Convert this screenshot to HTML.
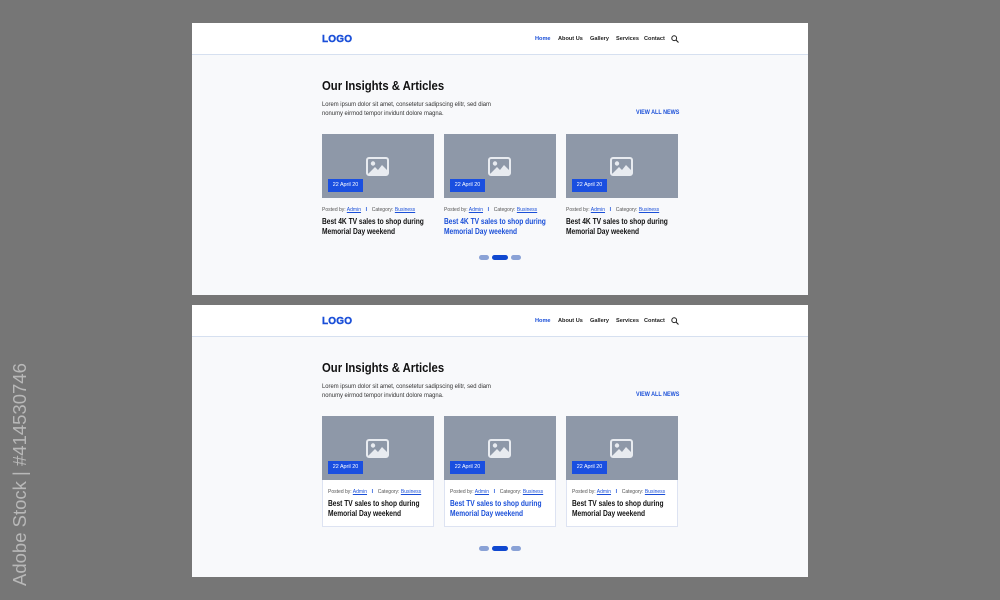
<!DOCTYPE html>
<html><head><meta charset="utf-8"><style>
*{margin:0;padding:0;box-sizing:border-box}
body{width:1000px;height:600px;background:#767676;position:relative;overflow:hidden;font-family:"Liberation Sans",Arial,sans-serif}
.p{position:absolute;left:192px;width:616px;height:272px;background:#f8f9fb}
.hd{position:absolute;left:0;top:0;width:616px;height:32px;background:#fff;border-bottom:1px solid #d6e0f0}
.a{position:absolute;white-space:nowrap;transform-origin:0 0}
.logo{left:130px;top:11px;font-size:10px;font-weight:bold;color:#1a4fd8;letter-spacing:0.2px;-webkit-text-stroke:0.4px #1a4fd8}
.nav{top:13px;font-size:5.6px;color:#222;font-weight:bold}
.h1{left:130px;top:55px;font-size:13px;font-weight:bold;color:#111;transform:scaleX(0.87)}
.para{left:130px;top:77px;font-size:6.4px;line-height:9px;color:#333;transform:scaleX(0.92)}
.van{left:444px;top:86px;font-size:6.3px;font-weight:bold;color:#1a4fd8;transform:scaleX(0.86)}
.card{position:absolute;top:111px;width:112px}
.img{position:absolute;left:0;top:0;width:112px;height:64px;background:#8e98a8}
.ic{position:absolute;left:44px;top:23px}
.bd{position:absolute;left:6px;top:45px;width:35px;height:13px;background:#1a4fe0;color:#fff;font-size:5.4px;text-align:center;line-height:13px}
.meta{position:absolute;font-size:5.4px;color:#555;white-space:nowrap;transform-origin:0 0;transform:scaleX(0.93)}
.meta u{color:#1a4fd8}
.meta b{color:#1a4fd8;margin:0 5px;font-weight:bold}
.tt{position:absolute;font-size:8px;font-weight:bold;line-height:10px;color:#111;white-space:nowrap;transform-origin:0 0;transform:scaleX(0.83)}
.blue{color:#1a4fd8}
.dot{position:absolute;top:232px;height:5px;border-radius:3px;background:#8aa2d6}
.box{position:absolute;left:0;top:0;width:112px;height:111px;background:#fff;border:1px solid #dde3f2}
</style></head><body>
<div class="a" style="left:9px;top:586px;transform:rotate(-90deg);font-size:18.5px;color:#b8b8b8;">Adobe Stock | #414530746</div>

<div class="p" style="top:23px">
<div class="hd"></div>
<div class="a logo">LOGO</div>
<div class="a nav" style="left:343px;color:#1a4fd8">Home</div>
<div class="a nav" style="left:366px">About Us</div>
<div class="a nav" style="left:398px">Gallery</div>
<div class="a nav" style="left:424px">Services</div>
<div class="a nav" style="left:452px">Contact</div>
<svg class="a" style="left:479px;top:12px" width="8" height="8" viewBox="0 0 8 8"><circle cx="3.2" cy="3.2" r="2.4" fill="none" stroke="#222" stroke-width="1"/><path d="M5 5L7.5 7.5" stroke="#222" stroke-width="1.1"/></svg>
<div class="a h1">Our Insights &amp; Articles</div>
<div class="a para">Lorem ipsum dolor sit amet, consetetur sadipscing elitr, sed diam<br>nonumy eirmod tempor invidunt dolore magna.</div>
<div class="a van">VIEW ALL NEWS</div>

<div class="card" style="left:130px"><div class="img"><svg class="ic" width="23" height="19" viewBox="0 0 23 19"><rect x="1" y="1" width="21" height="17" rx="2" fill="none" stroke="#e8ebf0" stroke-width="2"/><circle cx="7" cy="6.5" r="2.2" fill="#e8ebf0"/><path d="M2 17L9 10L12 13L16 8L21 13V17Z" fill="#e8ebf0"/></svg><div class="bd">22 April 20</div></div>
<div class="meta" style="left:0;top:73px">Posted by: <u>Admin</u><b>I</b>Category: <u>Business</u></div>
<div class="tt" style="left:0;top:83px">Best 4K TV sales to shop during<br>Memorial Day weekend</div></div>

<div class="card" style="left:252px"><div class="img"><svg class="ic" width="23" height="19" viewBox="0 0 23 19"><rect x="1" y="1" width="21" height="17" rx="2" fill="none" stroke="#e8ebf0" stroke-width="2"/><circle cx="7" cy="6.5" r="2.2" fill="#e8ebf0"/><path d="M2 17L9 10L12 13L16 8L21 13V17Z" fill="#e8ebf0"/></svg><div class="bd">22 April 20</div></div>
<div class="meta" style="left:0;top:73px">Posted by: <u>Admin</u><b>I</b>Category: <u>Business</u></div>
<div class="tt blue" style="left:0;top:83px">Best 4K TV sales to shop during<br>Memorial Day weekend</div></div>

<div class="card" style="left:374px"><div class="img"><svg class="ic" width="23" height="19" viewBox="0 0 23 19"><rect x="1" y="1" width="21" height="17" rx="2" fill="none" stroke="#e8ebf0" stroke-width="2"/><circle cx="7" cy="6.5" r="2.2" fill="#e8ebf0"/><path d="M2 17L9 10L12 13L16 8L21 13V17Z" fill="#e8ebf0"/></svg><div class="bd">22 April 20</div></div>
<div class="meta" style="left:0;top:73px">Posted by: <u>Admin</u><b>I</b>Category: <u>Business</u></div>
<div class="tt" style="left:0;top:83px">Best 4K TV sales to shop during<br>Memorial Day weekend</div></div>

<div class="dot" style="left:287px;width:10px"></div>
<div class="dot" style="left:300px;width:16px;background:#1048d0"></div>
<div class="dot" style="left:319px;width:10px"></div>
</div>

<div class="p" style="top:305px">
<div class="hd"></div>
<div class="a logo">LOGO</div>
<div class="a nav" style="left:343px;color:#1a4fd8">Home</div>
<div class="a nav" style="left:366px">About Us</div>
<div class="a nav" style="left:398px">Gallery</div>
<div class="a nav" style="left:424px">Services</div>
<div class="a nav" style="left:452px">Contact</div>
<svg class="a" style="left:479px;top:12px" width="8" height="8" viewBox="0 0 8 8"><circle cx="3.2" cy="3.2" r="2.4" fill="none" stroke="#222" stroke-width="1"/><path d="M5 5L7.5 7.5" stroke="#222" stroke-width="1.1"/></svg>
<div class="a h1">Our Insights &amp; Articles</div>
<div class="a para">Lorem ipsum dolor sit amet, consetetur sadipscing elitr, sed diam<br>nonumy eirmod tempor invidunt dolore magna.</div>
<div class="a van">VIEW ALL NEWS</div>

<div class="card" style="left:130px"><div class="box"></div><div class="img"><svg class="ic" width="23" height="19" viewBox="0 0 23 19"><rect x="1" y="1" width="21" height="17" rx="2" fill="none" stroke="#e8ebf0" stroke-width="2"/><circle cx="7" cy="6.5" r="2.2" fill="#e8ebf0"/><path d="M2 17L9 10L12 13L16 8L21 13V17Z" fill="#e8ebf0"/></svg><div class="bd">22 April 20</div></div>
<div class="meta" style="left:6px;top:73px">Posted by: <u>Admin</u><b>I</b>Category: <u>Business</u></div>
<div class="tt" style="left:6px;top:83px">Best TV sales to shop during<br>Memorial Day weekend</div></div>

<div class="card" style="left:252px"><div class="box"></div><div class="img"><svg class="ic" width="23" height="19" viewBox="0 0 23 19"><rect x="1" y="1" width="21" height="17" rx="2" fill="none" stroke="#e8ebf0" stroke-width="2"/><circle cx="7" cy="6.5" r="2.2" fill="#e8ebf0"/><path d="M2 17L9 10L12 13L16 8L21 13V17Z" fill="#e8ebf0"/></svg><div class="bd">22 April 20</div></div>
<div class="meta" style="left:6px;top:73px">Posted by: <u>Admin</u><b>I</b>Category: <u>Business</u></div>
<div class="tt blue" style="left:6px;top:83px">Best TV sales to shop during<br>Memorial Day weekend</div></div>

<div class="card" style="left:374px"><div class="box"></div><div class="img"><svg class="ic" width="23" height="19" viewBox="0 0 23 19"><rect x="1" y="1" width="21" height="17" rx="2" fill="none" stroke="#e8ebf0" stroke-width="2"/><circle cx="7" cy="6.5" r="2.2" fill="#e8ebf0"/><path d="M2 17L9 10L12 13L16 8L21 13V17Z" fill="#e8ebf0"/></svg><div class="bd">22 April 20</div></div>
<div class="meta" style="left:6px;top:73px">Posted by: <u>Admin</u><b>I</b>Category: <u>Business</u></div>
<div class="tt" style="left:6px;top:83px">Best TV sales to shop during<br>Memorial Day weekend</div></div>

<div class="dot" style="left:287px;top:241px;width:10px"></div>
<div class="dot" style="left:300px;top:241px;width:16px;background:#1048d0"></div>
<div class="dot" style="left:319px;top:241px;width:10px"></div>
</div>
</body></html>
